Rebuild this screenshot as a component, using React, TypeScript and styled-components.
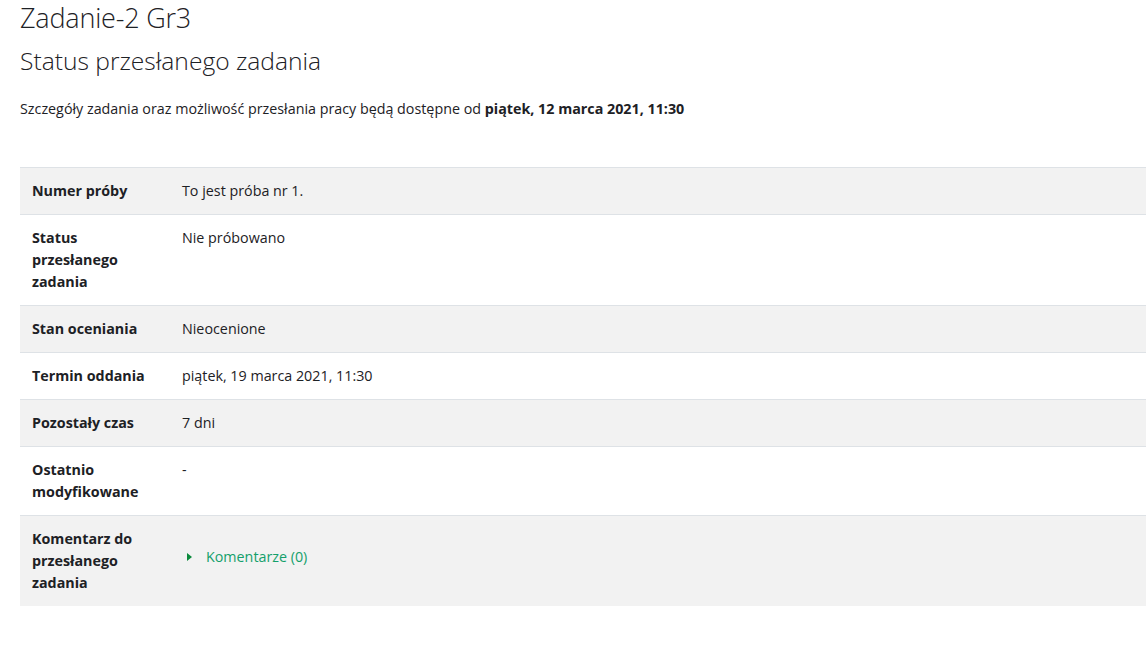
import React from "react";
import styled, { createGlobalStyle } from "styled-components";

const Global = createGlobalStyle`
  html, body { margin: 0; padding: 0; background: #fff; }
  body {
    font-family: "Open Sans", "Noto Sans", sans-serif;
    font-size: 14.3px;
    line-height: 1.5;
    color: #1d2125;
  }
`;

const Page = styled.main`
  padding: 0 0 0 20px;
`;

const Title = styled.h2`
  margin: 0 0 11px;
  padding-top: 1px;
  font-size: 27px;
  font-weight: 300;
  line-height: 1.25;
  letter-spacing: -0.2px;
`;

const Subtitle = styled.h3`
  margin: 0 0 23px;
  font-size: 24.6px;
  font-weight: 300;
  line-height: 1.2;
`;

const Intro = styled.p`
  margin: 0 0 47px;
  font-size: 14.3px;
`;

const Table = styled.table`
  width: 100%;
  border-collapse: collapse;
`;

const Row = styled.tr<{ $striped: boolean }>`
  background: ${(p) => (p.$striped ? "#f2f2f2" : "#fff")};
  border-top: 1px solid #dee2e6;
`;

const Head = styled.th`
  width: 126px;
  padding: 12px;
  text-align: left;
  vertical-align: top;
  font-weight: 700;
  font-size: 14.3px;
  line-height: 22px;
`;

const Cell = styled.td<{ $middle?: boolean }>`
  padding: 12px;
  vertical-align: ${(p) => (p.$middle ? "middle" : "top")};
  font-size: 14.3px;
  line-height: 22px;
`;

const Toggle = styled.a`
  display: inline-flex;
  align-items: center;
  gap: 14px;
  padding-left: 5px;
  margin-bottom: 9px;
  color: #14a06b;
  text-decoration: none;
  cursor: pointer;
`;

const Caret = styled.span`
  width: 0;
  height: 0;
  border-top: 4.5px solid transparent;
  border-bottom: 4.5px solid transparent;
  border-left: 5px solid #0b8a3c;
`;

const rows: { label: string; value: React.ReactNode; middle?: boolean }[] = [
  { label: "Numer próby", value: "To jest próba nr 1." },
  { label: "Status przesłanego zadania", value: "Nie próbowano" },
  { label: "Stan oceniania", value: "Nieocenione" },
  { label: "Termin oddania", value: "piątek, 19 marca 2021, 11:30" },
  { label: "Pozostały czas", value: "7 dni" },
  { label: "Ostatnio modyfikowane", value: "-" },
  {
    label: "Komentarz do przesłanego zadania",
    middle: true,
    value: (
      <Toggle>
        <Caret />
        Komentarze (0)
      </Toggle>
    ),
  },
];

export default function App() {
  return (
    <>
      <Global />
      <Page>
        <Title>Zadanie-2 Gr3</Title>
        <Subtitle>Status przesłanego zadania</Subtitle>
        <Intro>
          Szczegóły zadania oraz możliwość przesłania pracy będą dostępne od{" "}
          <strong>piątek, 12 marca 2021, 11:30</strong>
        </Intro>
        <Table>
          <tbody>
            {rows.map((r, i) => (
              <Row key={r.label} $striped={i % 2 === 0}>
                <Head>{r.label}</Head>
                <Cell $middle={r.middle}>{r.value}</Cell>
              </Row>
            ))}
          </tbody>
        </Table>
      </Page>
    </>
  );
}
